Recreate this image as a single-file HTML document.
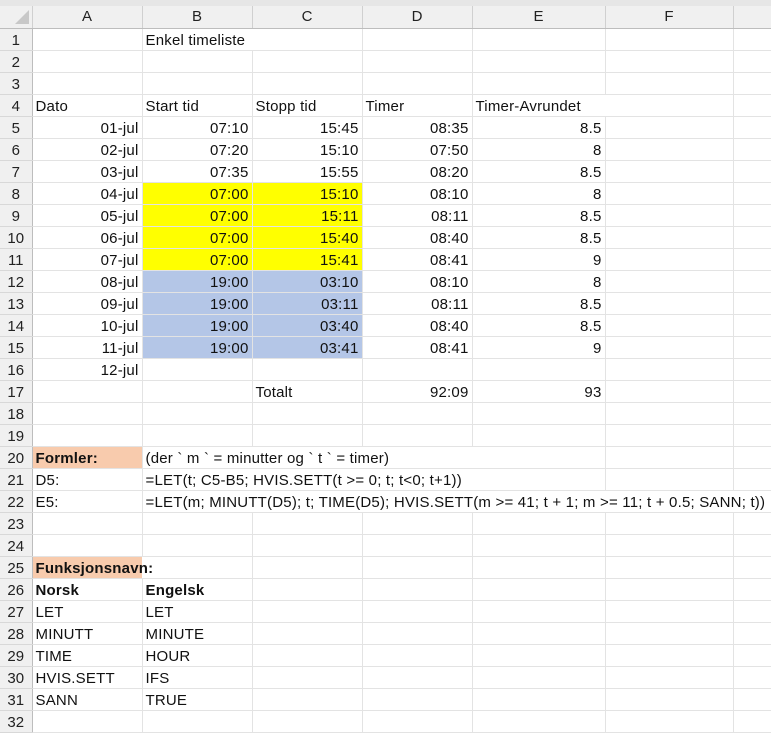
<!DOCTYPE html>
<html><head><meta charset="utf-8"><style>
html,body{margin:0;padding:0;background:#fff;width:771px;height:720px;overflow:hidden;font-family:"Liberation Sans",Arial,sans-serif;}
.top{height:6px;background:#e6e6e6;}
table{border-collapse:collapse;table-layout:fixed;position:absolute;top:6px;left:0;width:771px;}
td{padding:2px 3px 0 3px;border-right:1px solid #e3e3e3;border-bottom:1px solid #e3e3e3;font-size:15px;letter-spacing:0.2px;color:#111;white-space:nowrap;overflow:visible;line-height:19px;box-sizing:content-box;height:19px;}
tr.h td{background:#f0f0f0;text-align:center;border-right:1px solid #d0d0d0;border-bottom:1px solid #bdbdbd;height:22px;line-height:22px;padding:0;color:#222;font-size:15px;letter-spacing:0;}
td.n{background:#f0f0f0;text-align:center;border-right:1px solid #bdbdbd;border-bottom:1px solid #d8d8d8;color:#222;padding:2px 0 0 0;letter-spacing:0;}
.r{text-align:right;}
.y{background:#ffff00;}
.b{background:#b4c6e7;}
.o{background:#f8cbad;font-weight:bold;}
.bo{font-weight:bold;}
.nb{border-right-color:transparent;}
</style></head><body>
<div class="top"></div>
<table>
<colgroup><col style="width:32px"><col style="width:110px"><col style="width:110px"><col style="width:110px"><col style="width:110px"><col style="width:133px"><col style="width:128px"><col style="width:38px"></colgroup>
<tr class="h"><td><svg width="14" height="14" style="position:relative;top:3px;left:6px"><polygon points="14,0 14,14 0,14" fill="#c8c8c8"/></svg></td><td>A</td><td>B</td><td>C</td><td>D</td><td>E</td><td>F</td><td></td></tr>
<tr><td class="n">1</td><td></td><td class="nb">Enkel timeliste</td><td></td><td></td><td></td><td></td><td></td></tr>
<tr><td class="n">2</td><td></td><td></td><td></td><td></td><td></td><td></td><td></td></tr>
<tr><td class="n">3</td><td></td><td></td><td></td><td></td><td></td><td></td><td></td></tr>
<tr><td class="n">4</td><td>Dato</td><td>Start tid</td><td>Stopp tid</td><td>Timer</td><td class="nb">Timer-Avrundet</td><td></td><td></td></tr>
<tr><td class="n">5</td><td class="r">01-jul</td><td class="r">07:10</td><td class="r">15:45</td><td class="r">08:35</td><td class="r">8.5</td><td></td><td></td></tr>
<tr><td class="n">6</td><td class="r">02-jul</td><td class="r">07:20</td><td class="r">15:10</td><td class="r">07:50</td><td class="r">8</td><td></td><td></td></tr>
<tr><td class="n">7</td><td class="r">03-jul</td><td class="r">07:35</td><td class="r">15:55</td><td class="r">08:20</td><td class="r">8.5</td><td></td><td></td></tr>
<tr><td class="n">8</td><td class="r">04-jul</td><td class="r y">07:00</td><td class="r y">15:10</td><td class="r">08:10</td><td class="r">8</td><td></td><td></td></tr>
<tr><td class="n">9</td><td class="r">05-jul</td><td class="r y">07:00</td><td class="r y">15:11</td><td class="r">08:11</td><td class="r">8.5</td><td></td><td></td></tr>
<tr><td class="n">10</td><td class="r">06-jul</td><td class="r y">07:00</td><td class="r y">15:40</td><td class="r">08:40</td><td class="r">8.5</td><td></td><td></td></tr>
<tr><td class="n">11</td><td class="r">07-jul</td><td class="r y">07:00</td><td class="r y">15:41</td><td class="r">08:41</td><td class="r">9</td><td></td><td></td></tr>
<tr><td class="n">12</td><td class="r">08-jul</td><td class="r b">19:00</td><td class="r b">03:10</td><td class="r">08:10</td><td class="r">8</td><td></td><td></td></tr>
<tr><td class="n">13</td><td class="r">09-jul</td><td class="r b">19:00</td><td class="r b">03:11</td><td class="r">08:11</td><td class="r">8.5</td><td></td><td></td></tr>
<tr><td class="n">14</td><td class="r">10-jul</td><td class="r b">19:00</td><td class="r b">03:40</td><td class="r">08:40</td><td class="r">8.5</td><td></td><td></td></tr>
<tr><td class="n">15</td><td class="r">11-jul</td><td class="r b">19:00</td><td class="r b">03:41</td><td class="r">08:41</td><td class="r">9</td><td></td><td></td></tr>
<tr><td class="n">16</td><td class="r">12-jul</td><td></td><td></td><td></td><td></td><td></td><td></td></tr>
<tr><td class="n">17</td><td></td><td></td><td>Totalt</td><td class="r">92:09</td><td class="r">93</td><td></td><td></td></tr>
<tr><td class="n">18</td><td></td><td></td><td></td><td></td><td></td><td></td><td></td></tr>
<tr><td class="n">19</td><td></td><td></td><td></td><td></td><td></td><td></td><td></td></tr>
<tr><td class="n">20</td><td class="o">Formler:</td><td class="nb">(der ` m ` = minutter og ` t ` = timer)</td><td class="nb"></td><td class="nb"></td><td></td><td></td><td></td></tr>
<tr><td class="n">21</td><td>D5:</td><td class="nb">=LET(t; C5-B5; HVIS.SETT(t &gt;= 0; t; t&lt;0; t+1))</td><td class="nb"></td><td class="nb"></td><td></td><td></td><td></td></tr>
<tr><td class="n">22</td><td>E5:</td><td class="nb">=LET(m; MINUTT(D5); t; TIME(D5); HVIS.SETT(m &gt;= 41; t + 1; m &gt;= 11; t + 0.5; SANN; t))</td><td class="nb"></td><td class="nb"></td><td class="nb"></td><td class="nb"></td><td></td></tr>
<tr><td class="n">23</td><td></td><td></td><td></td><td></td><td></td><td></td><td></td></tr>
<tr><td class="n">24</td><td></td><td></td><td></td><td></td><td></td><td></td><td></td></tr>
<tr><td class="n">25</td><td class="o nb">Funksjonsnavn:</td><td></td><td></td><td></td><td></td><td></td><td></td></tr>
<tr><td class="n">26</td><td class="bo">Norsk</td><td class="bo">Engelsk</td><td></td><td></td><td></td><td></td><td></td></tr>
<tr><td class="n">27</td><td>LET</td><td>LET</td><td></td><td></td><td></td><td></td><td></td></tr>
<tr><td class="n">28</td><td>MINUTT</td><td>MINUTE</td><td></td><td></td><td></td><td></td><td></td></tr>
<tr><td class="n">29</td><td>TIME</td><td>HOUR</td><td></td><td></td><td></td><td></td><td></td></tr>
<tr><td class="n">30</td><td>HVIS.SETT</td><td>IFS</td><td></td><td></td><td></td><td></td><td></td></tr>
<tr><td class="n">31</td><td>SANN</td><td>TRUE</td><td></td><td></td><td></td><td></td><td></td></tr>
<tr><td class="n">32</td><td></td><td></td><td></td><td></td><td></td><td></td><td></td></tr>
</table>
</body></html>
